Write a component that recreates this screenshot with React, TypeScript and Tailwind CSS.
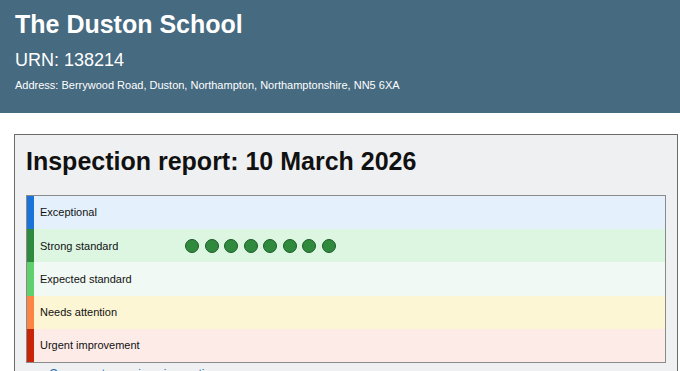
const bands = [
    { label: 'Exceptional', bar: 'bg-[#1a73d9]', bg: 'bg-[#e4f1fd]', dots: 0 },
    { label: 'Strong standard', bar: 'bg-[#2e8a3c]', bg: 'bg-[#dcf6e2]', dots: 8 },
    { label: 'Expected standard', bar: 'bg-[#5fd16c]', bg: 'bg-[#f1f9f4]', dots: 0 },
    { label: 'Needs attention', bar: 'bg-[#fb8542]', bg: 'bg-[#fdf6d4]', dots: 0 },
    { label: 'Urgent improvement', bar: 'bg-[#c92408]', bg: 'bg-[#fdebe8]', dots: 0 },
];

export default function App() {
    return (
        <div className="h-[371px] w-[680px] overflow-hidden bg-white font-['Liberation_Sans',Arial,sans-serif] text-[#111]">
            {/* School header */}
            <div className="h-[113px] bg-[#466a7f] px-[15px] pt-[9px] text-white">
                <h1 className="text-[25px] font-bold leading-[30px]">The Duston School</h1>
                <div className="mt-[10px] text-[18px] leading-[22px]">URN: 138214</div>
                <div className="mt-[6px] text-[11px] leading-[16px]">
                    Address: Berrywood Road, Duston, Northampton, Northamptonshire, NN5 6XA
                </div>
            </div>

            <div className="pl-[14px] pr-[2px] pt-[21px]">
                <div className="border border-[#6b6b6b] bg-[#eff0f1] px-[11px] pb-4 pt-[11px]">
                    <h2 className="text-[25px] font-bold leading-[30px]">Inspection report: 10 March 2026</h2>

                    <div className="mt-[19px] border border-[#8a8a8a]">
                        {bands.map((b) => (
                            <div key={b.label} className={`flex h-[33.2px] items-stretch ${b.bg}`}>
                                <div className={`w-[7px] shrink-0 ${b.bar}`} />
                                <div className="flex w-[151px] items-center pl-[6px] text-[11px]">{b.label}</div>
                                <div className="flex items-center gap-[5.5px]">
                                    {Array.from({ length: b.dots }).map((_, i) => (
                                        <span
                                            key={i}
                                            className="h-[14px] w-[14px] rounded-full border border-[#1f5a28] bg-[#2f8a3d]"
                                        />
                                    ))}
                                </div>
                            </div>
                        ))}
                    </div>

                    <div className="mt-[3px] flex items-center gap-3 pl-[6px] text-[12px] leading-[16px] text-[#1d70b8]">
                        <span className="text-[10px] text-[#777]">▸</span>
                        <span>Compare to previous inspections</span>
                    </div>
                </div>
            </div>
        </div>
    );
}
